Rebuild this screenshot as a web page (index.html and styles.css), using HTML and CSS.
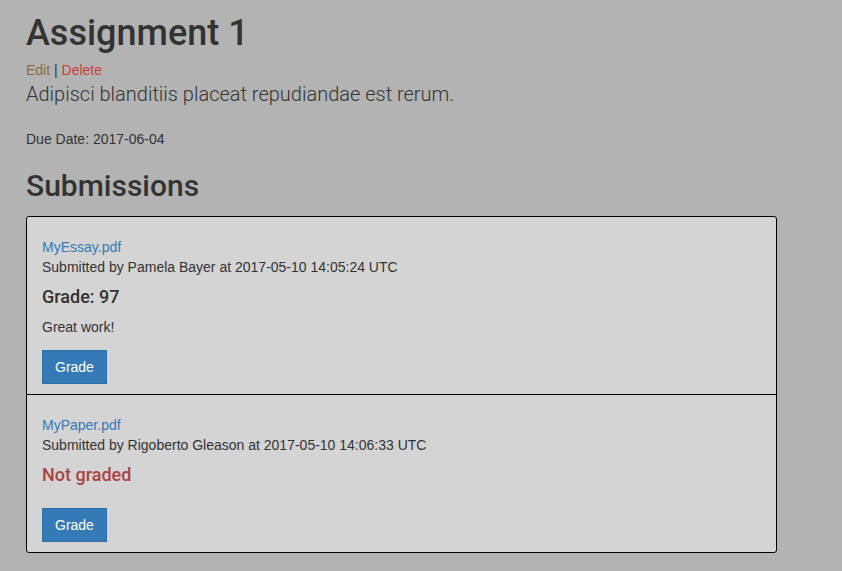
FILE: index.html
```html
<!DOCTYPE html>
<html lang="en">
<head>
<meta charset="utf-8">
<title>Assignment 1</title>
<link rel="stylesheet" href="styles.css">
</head>
<body>
<main class="page">
  <h1 class="title">Assignment 1</h1>
  <div class="actions"><a class="edit" href="#">Edit</a> | <a class="delete" href="#">Delete</a></div>
  <p class="lead">Adipisci blanditiis placeat repudiandae est rerum.</p>
  <p class="due">Due Date: 2017-06-04</p>
  <h2 class="section-title">Submissions</h2>
  <ul class="submissions">
    <li class="submission">
      <a class="file" href="#">MyEssay.pdf</a>
      <div class="meta">Submitted by Pamela Bayer at 2017-05-10 14:05:24 UTC</div>
      <h4 class="grade">Grade: 97</h4>
      <p class="comment">Great work!</p>
      <button class="btn" type="button">Grade</button>
    </li>
    <li class="submission">
      <a class="file" href="#">MyPaper.pdf</a>
      <div class="meta">Submitted by Rigoberto Gleason at 2017-05-10 14:06:33 UTC</div>
      <h4 class="grade ungraded">Not graded</h4>
      <p class="comment empty"></p>
      <button class="btn" type="button">Grade</button>
    </li>
  </ul>
</main>
</body>
</html>
```
FILE: styles.css
```css
html, body {
  margin: 0;
  padding: 0;
  background: #b3b3b3;
}
body {
  font-family: "Liberation Sans", Arial, sans-serif;
  font-size: 14px;
  line-height: 20px;
  color: #333333;
}
.page {
  width: 751px;
  padding: 14px 0 0 26px;
}
.title {
  font-family: Roboto, "Liberation Sans", sans-serif;
  font-weight: 500;
  font-size: 36px;
  line-height: 39px;
  margin: 0 0 7px;
  color: #333;
}
.actions {
  line-height: 20px;
}
.actions a {
  text-decoration: none;
}
.edit { color: #8a6d3b; }
.delete { color: #cf3b36; }
.lead {
  font-family: Roboto, "Liberation Sans", sans-serif;
  font-weight: 300;
  font-size: 20px;
  line-height: 29px;
  margin: 0 0 20px;
}
.due {
  margin: 0;
}
.section-title {
  font-family: Roboto, "Liberation Sans", sans-serif;
  font-weight: 500;
  font-size: 30px;
  line-height: 33px;
  margin: 20px 0 14px;
}
.submissions {
  list-style: none;
  margin: 0;
  padding: 0;
  background: #d4d4d4;
  border: 1px solid #000;
  border-radius: 3px;
}
.submission {
  display: flex;
  flex-direction: column;
  align-items: flex-start;
  padding: 20px 15px 10px;
}
.submission + .submission {
  border-top: 1px solid #000;
}
.file {
  color: #337ab7;
  text-decoration: none;
}
.grade {
  font-family: Roboto, "Liberation Sans", sans-serif;
  font-weight: 500;
  font-size: 18px;
  line-height: 20px;
  margin: 10px 0;
  color: #333;
}
.ungraded {
  color: #a94442;
}
.comment {
  margin: 0 0 13px;
}
.comment.empty {
  margin-bottom: 13px;
}
.btn {
  font-family: "Liberation Sans", Arial, sans-serif;
  font-size: 14px;
  line-height: 20px;
  padding: 6px 12px;
  color: #fff;
  background: #337ab7;
  border: 1px solid #2e6da4;
  border-radius: 0;
}
```
